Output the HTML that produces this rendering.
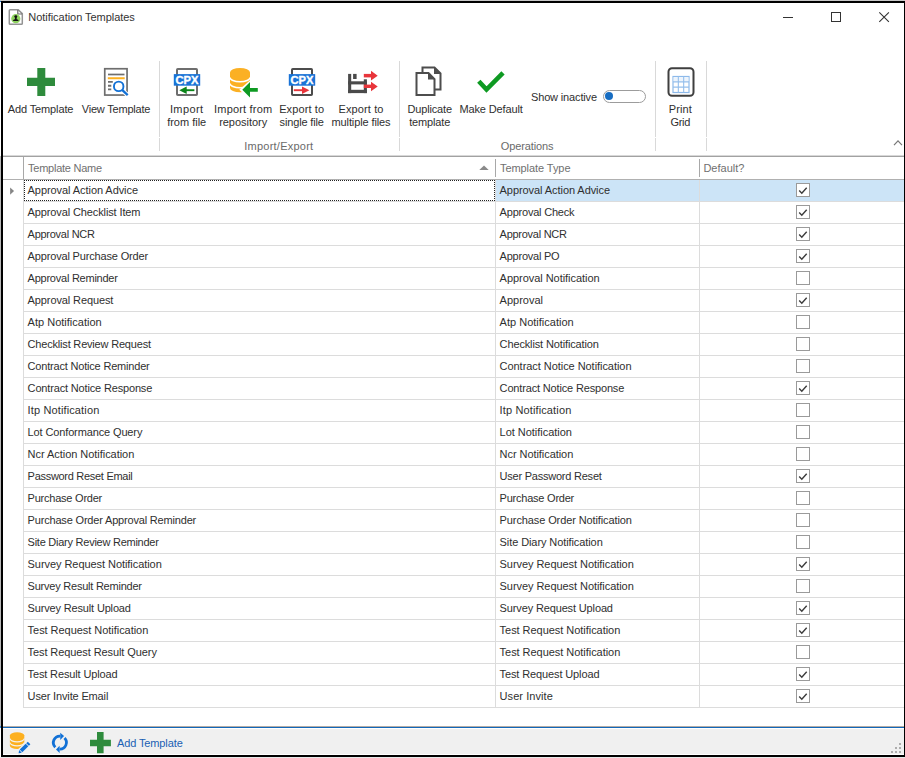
<!DOCTYPE html>
<html><head><meta charset="utf-8"><title>Notification Templates</title>
<style>
html,body{margin:0;padding:0;}
body{width:905px;height:758px;position:relative;overflow:hidden;background:#fff;font-family:"Liberation Sans",sans-serif;font-size:11px;color:#2f2f2f;}
.abs{position:absolute;}
#frame-top0{left:0;top:0;width:905px;height:1px;background:#c8c8c8;}
#frame-top{left:1px;top:1px;width:904px;height:2px;background:#000;}
#frame-left{left:1px;top:1px;width:2px;height:756px;background:#000;}
#frame-right{left:904px;top:1px;width:1px;height:756px;background:#000;}
#frame-bottom{left:1px;top:755px;width:904px;height:2px;background:#000;}
#frame-bot0{left:0;top:757px;width:905px;height:1px;background:#e8e8e8;}
#title{left:28.3px;top:10px;line-height:14px;color:#333;white-space:nowrap;}
.lbl{position:absolute;text-align:center;line-height:13px;white-space:nowrap;color:#2f2f2f;transform:translateX(-50%);}
.vsep{position:absolute;width:1px;background:#d9d9d9;}
.gcap{position:absolute;top:139px;line-height:14px;color:#6a6a6a;white-space:nowrap;transform:translateX(-50%);}
#ribbon-line{left:3px;top:155px;width:901px;height:1px;background:#d8d8d8;border-bottom:1px solid #a2a2a2;}
#hdr{left:3px;top:157px;width:901px;height:22px;background:#fff;}
#hdr-line{left:3px;top:179px;width:901px;height:1px;background:#b0b0b0;}
.hc{position:absolute;top:161px;line-height:14px;color:#707070;white-space:nowrap;}
.hsep{position:absolute;top:159px;height:18px;width:1px;background:#a8a8a8;}
.row{position:absolute;left:24px;width:880px;height:21px;border-bottom:1px solid #dcdcdc;}
.row .c1{position:absolute;left:0;top:0;width:471px;height:21px;line-height:21px;padding-left:3.6px;box-sizing:border-box;white-space:nowrap;}
.row .c2{position:absolute;left:471px;top:0;width:204px;height:21px;border-left:1px solid #dcdcdc;line-height:21px;padding-left:3.6px;box-sizing:border-box;white-space:nowrap;}
.row .c3{position:absolute;left:675px;top:0;width:205px;height:21px;border-left:1px solid #dcdcdc;box-sizing:border-box;}
.row.sel .c2,.row.sel .c3{background:#cce4f7;}
.row.sel .c1{outline:1px dotted #222;outline-offset:-1px;}
.cb{position:absolute;left:96px;top:3px;width:12px;height:12px;border:1px solid #9a9a9a;background:#fff;}
.cb svg{position:absolute;left:-1px;top:-1px;}
#indcol{left:23px;top:180px;width:1px;height:528px;background:#dcdcdc;}
#status{left:3px;top:728px;width:901px;height:27px;background:#f0f0f0;border-top:1px solid #fff;border-bottom:1px solid #fff;box-sizing:border-box;}
#status-line{left:3px;top:726px;width:901px;height:1px;background:#b4aca6;border-bottom:1px solid #1267b8;}
#st-text{left:117px;top:736px;line-height:14px;color:#1a5fb4;white-space:nowrap;}
</style></head><body>
<div class="abs" id="frame-top0"></div>

<!-- title bar -->
<svg class="abs" style="left:8px;top:8px" width="16" height="18" viewBox="0 0 16 18">
  <path d="M2.2 1.7 H10.2 L14.3 5.6 V15.4 a0.9 0.9 0 0 1 -0.9 0.9 H2.2 a0.9 0.9 0 0 1 -0.9 -0.9 V2.6 a0.9 0.9 0 0 1 0.9 -0.9 Z" fill="#fff" stroke="#939393" stroke-width="1.5"/>
  <path d="M9.8 2 V6 H14" fill="none" stroke="#6a6a6a" stroke-width="1.2"/>
  <circle cx="7.8" cy="10.7" r="4.6" fill="#8fd35f"/>
  <ellipse cx="7.8" cy="8.55" rx="1.45" ry="1.35" fill="#111"/>
  <path d="M7.05 9 H8.55 L8.7 11.2 L10.1 11.7 L10.7 13 H4.9 L5.5 11.7 L6.9 11.2 Z" fill="#111"/>
</svg>
<div class="abs" id="title"><span style="letter-spacing:-0.04px">Notification Templates</span></div>
<svg class="abs" style="left:780px;top:8px" width="116" height="18" viewBox="0 0 116 18">
  <path d="M3 9.5 H13" stroke="#333" stroke-width="1" fill="none"/>
  <rect x="51.5" y="4.5" width="9" height="9" fill="none" stroke="#333" stroke-width="1"/>
  <path d="M99.3 4.3 L108.9 13.9 M108.9 4.3 L99.3 13.9" stroke="#333" stroke-width="1.1" fill="none"/>
</svg>

<!-- ribbon -->
<!-- Add Template -->
<svg class="abs" style="left:27px;top:68px" width="28" height="28"><path d="M10.3 0 h8 v9.7 h9.7 v8.4 h-9.7 v9.9 h-8 v-9.9 h-10.3 v-8.4 h10.3 z" fill="#2e8b3c"/></svg>
<div class="lbl" style="left:40.5px;top:103px"><span style="letter-spacing:-0.12px">Add Template</span></div>

<!-- View Template -->
<svg class="abs" style="left:102px;top:66px" width="30" height="32" viewBox="0 0 30 32">
  <rect x="2.75" y="2.75" width="22.3" height="26.3" fill="#fff" stroke="#6e6e6e" stroke-width="1.7"/>
  <path d="M6 8.5 H22.5" stroke="#6e6e6e" stroke-width="1.7"/>
  <path d="M5.8 12.25 H22.7" stroke="#fdb01f" stroke-width="2"/>
  <path d="M6 15.9 H10.8 M6 19.75 H9.3 M6 23.3 H9.3" stroke="#6e6e6e" stroke-width="1.8"/>
  <path d="M21.2 25 L27.2 30.6" stroke="#fff" stroke-width="4.4"/>
  <circle cx="16.7" cy="20.4" r="4.75" fill="#fff" stroke="#1271d6" stroke-width="1.9"/>
  <path d="M20.1 23.9 L25.7 29.1" stroke="#1271d6" stroke-width="2.3"/>
</svg>
<div class="lbl" style="left:116px;top:103px"><span style="letter-spacing:-0.20px">View Template</span></div>

<div class="vsep" style="left:159px;top:61px;height:76px"></div>
<div class="vsep" style="left:159px;top:138px;height:13px"></div>

<!-- Import from file -->
<svg class="abs" style="left:173px;top:66px" width="28" height="32" viewBox="0 0 28 32">
  <rect x="4" y="3" width="20" height="26" fill="#fff" stroke="#6e6e6e" stroke-width="2" rx="0.8"/>
  <rect x="0.8" y="8.1" width="26.4" height="11.6" fill="#1a73d6"/>
  <text x="14" y="17.6" text-anchor="middle" font-family="Liberation Sans, sans-serif" font-weight="bold" font-size="10.4" fill="#fff" stroke="#fff" stroke-width="0.35" textLength="23" lengthAdjust="spacingAndGlyphs">CPX</text>
  <path d="M21.4 24.2 H13" stroke="#0b8419" stroke-width="1.9"/>
  <path d="M6.3 24.2 L13.7 20.5 V27.9 Z" fill="#0b8419"/>
</svg>
<div class="lbl" style="left:186.7px;top:103px"><span style="letter-spacing:0.39px">Import</span><br><span style="letter-spacing:-0.01px">from file</span></div>

<!-- Import from repository -->
<svg class="abs" style="left:228px;top:66px" width="32" height="34" viewBox="0 0 32 34">
  <path d="M2 6.4 v15.6 a10 4.3 0 0 0 20 0 v-15.6 z" fill="#fbb024"/>
  <ellipse cx="12" cy="6.4" rx="10" ry="4.3" fill="#fbb024"/>
  <path d="M2 11.5 a10 4.3 0 0 0 20 0" fill="none" stroke="#fff" stroke-width="1.6"/>
  <path d="M2 17.5 a10 4.3 0 0 0 20 0" fill="none" stroke="#fff" stroke-width="1.6"/>
  <path d="M12.8 23.85 L22.5 15.2 V32.5 Z" fill="#fff" stroke="#fff" stroke-width="2"/>
  <path d="M14.3 23.85 L22 16.1 V22 H29.8 V25.8 H22 V31.6 Z" fill="#0e9a22"/>
</svg>
<div class="lbl" style="left:243.2px;top:103px"><span style="letter-spacing:0.18px">Import from</span><br><span style="letter-spacing:-0.02px">repository</span></div>

<!-- Export to single file -->
<svg class="abs" style="left:288px;top:66px" width="28" height="32" viewBox="0 0 28 32">
  <rect x="4" y="3" width="20" height="26" fill="#fff" stroke="#4c4c4c" stroke-width="2" rx="0.8"/>
  <rect x="0.8" y="8.1" width="26.4" height="11.6" fill="#1a73d6"/>
  <text x="14" y="17.6" text-anchor="middle" font-family="Liberation Sans, sans-serif" font-weight="bold" font-size="10.4" fill="#fff" stroke="#fff" stroke-width="0.35" textLength="23" lengthAdjust="spacingAndGlyphs">CPX</text>
  <path d="M5.8 24.2 H14.5" stroke="#e8353b" stroke-width="1.9"/>
  <path d="M21.4 24.2 L14 20.5 V27.9 Z" fill="#e8353b"/>
</svg>
<div class="lbl" style="left:301.7px;top:103px"><span style="letter-spacing:0.12px">Export to</span><br><span style="letter-spacing:-0.15px">single file</span></div>

<!-- Export to multiple files -->
<svg class="abs" style="left:346px;top:66px" width="34" height="32" viewBox="0 0 34 32">
  <rect x="2.1" y="7.9" width="3.1" height="19.2" fill="#4a4a4a"/>
  <rect x="2.1" y="23.8" width="18.8" height="3.3" fill="#4a4a4a"/>
  <rect x="17.8" y="13.3" width="3.1" height="13.8" fill="#4a4a4a"/>
  <rect x="2.1" y="15.3" width="18.8" height="3.1" fill="#4a4a4a"/>
  <rect x="7.1" y="7.9" width="3.5" height="5.1" fill="#4a4a4a"/>
  <rect x="17.8" y="7.9" width="7.5" height="3.5" fill="#e8353b"/>
  <path d="M25 4.8 L31.7 9.65 L25 14.5 Z" fill="#e8353b"/>
  <rect x="17.8" y="18.6" width="7.5" height="3.4" fill="#e8353b"/>
  <path d="M25 15.7 L31.7 20.5 L25 25.3 Z" fill="#e8353b"/>
</svg>
<div class="lbl" style="left:361px;top:103px"><span style="letter-spacing:0.12px">Export to</span><br><span style="letter-spacing:-0.11px">multiple files</span></div>

<div class="gcap" style="left:278.8px"><span style="letter-spacing:0.24px">Import/Export</span></div>

<div class="vsep" style="left:399px;top:61px;height:76px"></div>
<div class="vsep" style="left:399px;top:138px;height:13px"></div>

<!-- Duplicate template -->
<svg class="abs" style="left:413.2px;top:64.3px" width="30" height="34" viewBox="0 0 30 34">
  <path d="M9.5 3.5 H21.5 L27.5 9.5 V25.5 H9.5 Z" fill="#fff" stroke="#4d4d4d" stroke-width="2"/>
  <path d="M21 3.5 V10 H27.5 Z" fill="#4d4d4d"/>
  <path d="M3.5 9.1 H15.5 L21.5 15.1 V31 H3.5 Z" fill="#fff" stroke="#4d4d4d" stroke-width="2"/>
  <path d="M15 9.1 V15.6 H21.5 Z" fill="#4d4d4d"/>
</svg>
<div class="lbl" style="left:429.7px;top:103px"><span style="letter-spacing:-0.15px">Duplicate</span><br><span style="letter-spacing:-0.14px">template</span></div>

<!-- Make Default -->
<svg class="abs" style="left:475px;top:68px" width="32" height="28" viewBox="0 0 32 28">
  <path d="M3.8 13.2 L11.5 21.5 L28 4.8" fill="none" stroke="#0e9a22" stroke-width="4.6" stroke-linejoin="miter"/>
</svg>
<div class="lbl" style="left:491.1px;top:103px"><span style="letter-spacing:-0.13px">Make Default</span></div>

<div class="abs" style="left:531px;top:90px;line-height:14px;white-space:nowrap;"><span style="letter-spacing:-0.15px">Show inactive</span></div>
<div class="abs" style="left:603px;top:90px;width:41px;height:11px;border:1px solid #9c9c9c;border-radius:7px;background:#fff;"></div>
<div class="abs" style="left:605px;top:92px;width:8px;height:8px;border-radius:4px;background:#176dc2;"></div>

<div class="gcap" style="left:527.1px"><span style="letter-spacing:-0.10px">Operations</span></div>

<div class="vsep" style="left:655px;top:61px;height:76px"></div>
<div class="vsep" style="left:655px;top:138px;height:13px"></div>

<!-- Print Grid -->
<svg class="abs" style="left:666px;top:66px" width="30" height="32" viewBox="0 0 30 32">
  <rect x="2.5" y="2.3" width="25" height="27.4" rx="3.5" fill="#fff" stroke="#3f3f3f" stroke-width="2"/>
  <rect x="7" y="10.5" width="16" height="16" fill="#fff" stroke="#8db9ea" stroke-width="1.2"/>
  <rect x="7.6" y="11.1" width="14.8" height="4.4" fill="#edf4fc"/>
  <path d="M12.33 10.5 V26.5 M17.67 10.5 V26.5 M7 15.83 H23 M7 21.17 H23" stroke="#95bfec" stroke-width="1.1" fill="none"/>
</svg>
<div class="lbl" style="left:680.3px;top:103px"><span style="letter-spacing:0.12px">Print</span><br><span style="letter-spacing:-0.29px">Grid</span></div>

<div class="vsep" style="left:706px;top:61px;height:76px"></div>
<div class="vsep" style="left:706px;top:138px;height:13px"></div>

<svg class="abs" style="left:891px;top:139px" width="12" height="10" viewBox="0 0 12 10"><path d="M3 6.2 L7 1.9 L11 6.2" fill="none" stroke="#777" stroke-width="1.2"/></svg>

<div class="abs" id="ribbon-line"></div>

<!-- grid -->
<div class="abs" id="hdr"></div>
<div class="hc" style="left:28px"><span style="letter-spacing:-0.24px">Template Name</span></div>
<div class="hc" style="left:500px"><span style="letter-spacing:-0.07px">Template Type</span></div>
<div class="hc" style="left:703.4px"><span style="letter-spacing:0.01px">Default?</span></div>
<div class="abs" id="indcol"></div>
<div class="hsep" style="left:23px;top:157px;height:22px;background:#a8a8a8"></div>
<div class="hsep" style="left:495px"></div>
<div class="hsep" style="left:699px"></div>
<svg class="abs" style="left:479px;top:165px" width="10" height="6"><path d="M0.3 5 L5 0.4 L9.7 5 Z" fill="#8a8a8a"/></svg>
<div class="abs" id="hdr-line"></div>
<div class="row sel" style="top:180px"><div class="c1"><span style="letter-spacing:-0.07px">Approval Action Advice</span></div><div class="c2"><span style="letter-spacing:-0.07px">Approval Action Advice</span></div><div class="c3"><span class="cb"><svg width="14" height="14" viewBox="0 0 14 14"><path d="M3.2 7.6 L5.8 10.3 L10.7 4.7" fill="none" stroke="#3c3c3c" stroke-width="1.4"/></svg></span></div></div>
<div class="row" style="top:202px"><div class="c1"><span style="letter-spacing:-0.12px">Approval Checklist Item</span></div><div class="c2"><span style="letter-spacing:-0.21px">Approval Check</span></div><div class="c3"><span class="cb"><svg width="14" height="14" viewBox="0 0 14 14"><path d="M3.2 7.6 L5.8 10.3 L10.7 4.7" fill="none" stroke="#3c3c3c" stroke-width="1.4"/></svg></span></div></div>
<div class="row" style="top:224px"><div class="c1"><span style="letter-spacing:-0.27px">Approval NCR</span></div><div class="c2"><span style="letter-spacing:-0.27px">Approval NCR</span></div><div class="c3"><span class="cb"><svg width="14" height="14" viewBox="0 0 14 14"><path d="M3.2 7.6 L5.8 10.3 L10.7 4.7" fill="none" stroke="#3c3c3c" stroke-width="1.4"/></svg></span></div></div>
<div class="row" style="top:246px"><div class="c1"><span style="letter-spacing:-0.16px">Approval Purchase Order</span></div><div class="c2"><span style="letter-spacing:-0.23px">Approval PO</span></div><div class="c3"><span class="cb"><svg width="14" height="14" viewBox="0 0 14 14"><path d="M3.2 7.6 L5.8 10.3 L10.7 4.7" fill="none" stroke="#3c3c3c" stroke-width="1.4"/></svg></span></div></div>
<div class="row" style="top:268px"><div class="c1"><span style="letter-spacing:-0.24px">Approval Reminder</span></div><div class="c2"><span style="letter-spacing:-0.04px">Approval Notification</span></div><div class="c3"><span class="cb"></span></div></div>
<div class="row" style="top:290px"><div class="c1"><span style="letter-spacing:-0.11px">Approval Request</span></div><div class="c2"><span style="letter-spacing:-0.01px">Approval</span></div><div class="c3"><span class="cb"><svg width="14" height="14" viewBox="0 0 14 14"><path d="M3.2 7.6 L5.8 10.3 L10.7 4.7" fill="none" stroke="#3c3c3c" stroke-width="1.4"/></svg></span></div></div>
<div class="row" style="top:312px"><div class="c1"><span style="letter-spacing:0.01px">Atp Notification</span></div><div class="c2"><span style="letter-spacing:0.01px">Atp Notification</span></div><div class="c3"><span class="cb"></span></div></div>
<div class="row" style="top:334px"><div class="c1"><span style="letter-spacing:-0.19px">Checklist Review Request</span></div><div class="c2"><span style="letter-spacing:-0.13px">Checklist Notification</span></div><div class="c3"><span class="cb"></span></div></div>
<div class="row" style="top:356px"><div class="c1"><span style="letter-spacing:-0.19px">Contract Notice Reminder</span></div><div class="c2"><span style="letter-spacing:-0.05px">Contract Notice Notification</span></div><div class="c3"><span class="cb"></span></div></div>
<div class="row" style="top:378px"><div class="c1"><span style="letter-spacing:-0.16px">Contract Notice Response</span></div><div class="c2"><span style="letter-spacing:-0.16px">Contract Notice Response</span></div><div class="c3"><span class="cb"><svg width="14" height="14" viewBox="0 0 14 14"><path d="M3.2 7.6 L5.8 10.3 L10.7 4.7" fill="none" stroke="#3c3c3c" stroke-width="1.4"/></svg></span></div></div>
<div class="row" style="top:400px"><div class="c1"><span style="letter-spacing:0.13px">Itp Notification</span></div><div class="c2"><span style="letter-spacing:0.13px">Itp Notification</span></div><div class="c3"><span class="cb"></span></div></div>
<div class="row" style="top:422px"><div class="c1"><span style="letter-spacing:-0.13px">Lot Conformance Query</span></div><div class="c2"><span style="letter-spacing:-0.03px">Lot Notification</span></div><div class="c3"><span class="cb"></span></div></div>
<div class="row" style="top:444px"><div class="c1"><span style="letter-spacing:-0.04px">Ncr Action Notification</span></div><div class="c2"><span style="letter-spacing:-0.06px">Ncr Notification</span></div><div class="c3"><span class="cb"></span></div></div>
<div class="row" style="top:466px"><div class="c1"><span style="letter-spacing:-0.29px">Password Reset Email</span></div><div class="c2"><span style="letter-spacing:-0.23px">User Password Reset</span></div><div class="c3"><span class="cb"><svg width="14" height="14" viewBox="0 0 14 14"><path d="M3.2 7.6 L5.8 10.3 L10.7 4.7" fill="none" stroke="#3c3c3c" stroke-width="1.4"/></svg></span></div></div>
<div class="row" style="top:488px"><div class="c1"><span style="letter-spacing:-0.23px">Purchase Order</span></div><div class="c2"><span style="letter-spacing:-0.23px">Purchase Order</span></div><div class="c3"><span class="cb"></span></div></div>
<div class="row" style="top:510px"><div class="c1"><span style="letter-spacing:-0.18px">Purchase Order Approval Reminder</span></div><div class="c2"><span style="letter-spacing:-0.11px">Purchase Order Notification</span></div><div class="c3"><span class="cb"></span></div></div>
<div class="row" style="top:532px"><div class="c1"><span style="letter-spacing:-0.25px">Site Diary Review Reminder</span></div><div class="c2"><span style="letter-spacing:-0.09px">Site Diary Notification</span></div><div class="c3"><span class="cb"></span></div></div>
<div class="row" style="top:554px"><div class="c1"><span style="letter-spacing:-0.06px">Survey Request Notification</span></div><div class="c2"><span style="letter-spacing:-0.06px">Survey Request Notification</span></div><div class="c3"><span class="cb"><svg width="14" height="14" viewBox="0 0 14 14"><path d="M3.2 7.6 L5.8 10.3 L10.7 4.7" fill="none" stroke="#3c3c3c" stroke-width="1.4"/></svg></span></div></div>
<div class="row" style="top:576px"><div class="c1"><span style="letter-spacing:-0.23px">Survey Result Reminder</span></div><div class="c2"><span style="letter-spacing:-0.06px">Survey Request Notification</span></div><div class="c3"><span class="cb"></span></div></div>
<div class="row" style="top:598px"><div class="c1"><span style="letter-spacing:-0.16px">Survey Result Upload</span></div><div class="c2"><span style="letter-spacing:-0.14px">Survey Request Upload</span></div><div class="c3"><span class="cb"><svg width="14" height="14" viewBox="0 0 14 14"><path d="M3.2 7.6 L5.8 10.3 L10.7 4.7" fill="none" stroke="#3c3c3c" stroke-width="1.4"/></svg></span></div></div>
<div class="row" style="top:620px"><div class="c1"><span style="letter-spacing:-0.04px">Test Request Notification</span></div><div class="c2"><span style="letter-spacing:-0.04px">Test Request Notification</span></div><div class="c3"><span class="cb"><svg width="14" height="14" viewBox="0 0 14 14"><path d="M3.2 7.6 L5.8 10.3 L10.7 4.7" fill="none" stroke="#3c3c3c" stroke-width="1.4"/></svg></span></div></div>
<div class="row" style="top:642px"><div class="c1"><span style="letter-spacing:-0.09px">Test Request Result Query</span></div><div class="c2"><span style="letter-spacing:-0.04px">Test Request Notification</span></div><div class="c3"><span class="cb"></span></div></div>
<div class="row" style="top:664px"><div class="c1"><span style="letter-spacing:-0.14px">Test Result Upload</span></div><div class="c2"><span style="letter-spacing:-0.12px">Test Request Upload</span></div><div class="c3"><span class="cb"><svg width="14" height="14" viewBox="0 0 14 14"><path d="M3.2 7.6 L5.8 10.3 L10.7 4.7" fill="none" stroke="#3c3c3c" stroke-width="1.4"/></svg></span></div></div>
<div class="row" style="top:686px"><div class="c1"><span style="letter-spacing:-0.15px">User Invite Email</span></div><div class="c2"><span style="letter-spacing:0.07px">User Invite</span></div><div class="c3"><span class="cb"><svg width="14" height="14" viewBox="0 0 14 14"><path d="M3.2 7.6 L5.8 10.3 L10.7 4.7" fill="none" stroke="#3c3c3c" stroke-width="1.4"/></svg></span></div></div>
<svg class="abs" style="left:10px;top:187px" width="5" height="8"><path d="M0.1 0.4 L4.1 4 L0.1 7.7 Z" fill="#858585"/></svg>

<!-- status bar -->
<div class="abs" id="status"></div>
<div class="abs" id="status-line"></div>
<svg class="abs" style="left:8px;top:730px" width="26" height="26" viewBox="0 0 26 26">
  <path d="M1.9 5.4 v10.4 a7.2 3.2 0 0 0 14.4 0 v-10.4 z" fill="#fdb01f"/>
  <ellipse cx="9.1" cy="5.4" rx="7.2" ry="3.1" fill="#fdb01f"/>
  <path d="M1.9 8.6 a7.2 3.2 0 0 0 14.4 0" fill="none" stroke="#f4f2ee" stroke-width="1.2"/>
  <path d="M1.9 12.6 a7.2 3.2 0 0 0 14.4 0" fill="none" stroke="#f4f2ee" stroke-width="1.2"/>
  <path d="M22.2 11.9 L9.8 24" stroke="#f0f0f0" stroke-width="6.4"/>
  <path d="M21.1 13.0 L19.55 14.5" stroke="#1271d6" stroke-width="3.7"/>
  <path d="M19.0 15.05 L13.0 20.9" stroke="#1271d6" stroke-width="3.7"/>
  <path d="M13.79 22.73 L11.21 20.07 L10.6 23.3 Z" fill="#1271d6"/>
</svg>
<svg class="abs" style="left:50px;top:731px" width="20" height="24" viewBox="0 0 20 24">
  <path d="M5.3 16.2 A6.5 6.5 0 0 1 10.25 5.1" fill="none" stroke="#1271d6" stroke-width="2.8"/>
  <path d="M14.5 7.0 A6.5 6.5 0 0 1 9.6 18.1" fill="none" stroke="#1271d6" stroke-width="2.8"/>
  <path d="M10.25 1.75 L14.05 5.1 L10.25 8.9 Z" fill="#1271d6"/>
  <path d="M9.6 14.8 L6.0 18.4 L9.6 22 Z" fill="#1271d6"/>
</svg>
<svg class="abs" style="left:90px;top:732.3px" width="21" height="22"><path d="M7 0 h6.6 v7.7 h7.3 v6.6 h-7.3 v7 h-6.6 v-7 h-7 v-6.6 h7 z" fill="#2e8b3c"/></svg>
<div class="abs" id="st-text"><span style="letter-spacing:-0.12px">Add Template</span></div>
<svg class="abs" style="left:890px;top:742px" width="12" height="12"><g fill="#adadad"><rect x="9" y="1" width="2" height="2"/><rect x="5" y="5" width="2" height="2"/><rect x="9" y="5" width="2" height="2"/><rect x="1" y="9" width="2" height="2"/><rect x="5" y="9" width="2" height="2"/><rect x="9" y="9" width="2" height="2"/></g></svg>

<!-- window frame -->
<div class="abs" id="frame-top"></div>
<div class="abs" id="frame-left"></div>
<div class="abs" id="frame-right"></div>
<div class="abs" id="frame-bottom"></div>
<div class="abs" id="frame-bot0"></div>
<div class="abs" style="left:0;top:156px;width:1px;height:570px;background:#b8b8b8"></div>
<div class="abs" style="left:0;top:726px;width:1px;height:2px;background:#3a86d0"></div>
<div class="abs" style="left:0;top:1px;width:1px;height:1px;background:#2a7fd4"></div>
</body></html>
